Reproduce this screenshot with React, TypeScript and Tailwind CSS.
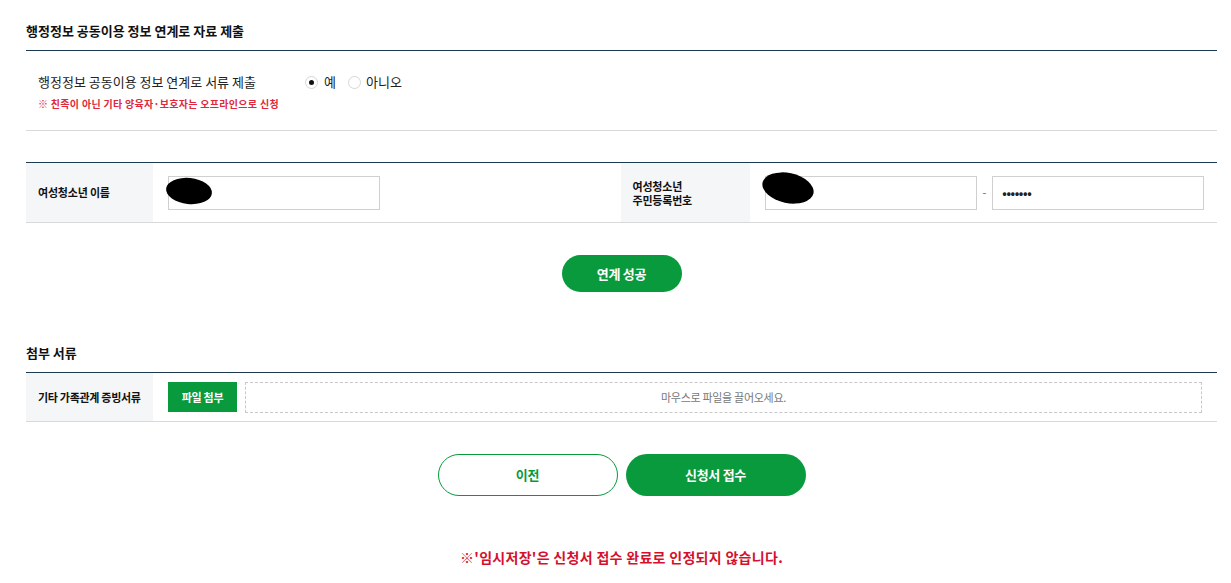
import React from "react";

const font = { fontFamily: '"Noto Sans CJK KR", "Noto Sans", sans-serif' };

function Radio({ checked }: { checked?: boolean }) {
  return (
    <span className="inline-flex h-[13px] w-[13px] items-center justify-center rounded-full border border-[#d6d6d6] bg-white">
      {checked && <span className="h-[5px] w-[5px] rounded-full bg-[#111]" />}
    </span>
  );
}

export default function App() {
  return (
    <div className="min-h-[583px] w-full bg-white pl-[26px] pr-[14px] text-[#222]" style={font}>
      {/* Section 1 title */}
      <div className="border-b border-[#1d3b50] pb-[10px] pt-[22px]">
        <h2 className="text-[13px] font-bold leading-[18px] tracking-[0px] text-[#111]">
          행정정보 공동이용 정보 연계로 자료 제출
        </h2>
      </div>
      <div className="border-b border-[#d9d9d9] pb-[19px] pl-[12px] pt-[22px]">
        <div className="flex items-center leading-[18px]">
          <span className="w-[267px] text-[13px] tracking-[0px] text-[#222]">
            행정정보 공동이용 정보 연계로 서류 제출
          </span>
          <label className="flex items-center gap-[6px] text-[13px]">
            <Radio checked />
            <span>예</span>
          </label>
          <label className="ml-[12px] flex items-center gap-[5px] text-[13px]">
            <Radio />
            <span>아니오</span>
          </label>
        </div>
        <p className="mt-[6px] text-[10px] font-bold leading-[14px] tracking-[0.3px] text-[#e0283c]">
          ※ 친족이 아닌 기타 양육자·보호자는 오프라인으로 신청
        </p>
      </div>

      {/* Youth info table */}
      <div className="mt-[31px] grid grid-cols-[127px_1fr_129px_1fr] border-b border-t border-b-[#d9d9d9] border-t-[#1d3b50]">
        <div className="flex h-[59px] items-center bg-[#f5f6f8] pl-[12px] text-[11px] font-bold tracking-[-0.2px] text-[#111]">
          여성청소년 이름
        </div>
        <div className="flex items-center pl-[15px]">
          <div className="relative h-[34px] w-[212px] border border-[#d0d0d0] bg-white">
            <div className="absolute left-[-3px] top-[1px] h-[26px] w-[46px] rotate-[6deg] rounded-[50%] bg-black" />
          </div>
        </div>
        <div className="flex items-center bg-[#f5f6f8] pl-[12px] text-[11px] font-bold leading-[14px] tracking-[-0.2px] text-[#111]">
          <div>
            여성청소년
            <br />
            주민등록번호
          </div>
        </div>
        <div className="flex items-center pl-[15px]">
          <div className="relative h-[34px] w-[212px] border border-[#d0d0d0] bg-white">
            <div className="absolute left-[-4px] top-[-4px] h-[30px] w-[52px] rotate-[12deg] rounded-[50%] bg-black" />
          </div>
          <span className="mx-[6px] text-[11px] text-[#666]">-</span>
          <div className="flex h-[34px] w-[212px] items-center border border-[#d0d0d0] bg-white pl-[9px] text-[12px] font-bold tracking-[-0.4px] text-[#222]">
            •••••••
          </div>
        </div>
      </div>

      <div className="mt-[32px] flex justify-center">
        <button className="h-[37px] w-[120px] rounded-full bg-[#089a3d] text-[13px] font-bold tracking-[-0.3px] text-white">
          연계 성공
        </button>
      </div>

      {/* Attachments */}
      <div className="mt-[52px] border-b border-[#1d3b50] pb-[10px]">
        <h2 className="text-[13px] font-bold leading-[18px] tracking-[0px] text-[#111]">첨부 서류</h2>
      </div>
      <div className="grid grid-cols-[127px_1fr] border-b border-[#d9d9d9]">
        <div className="flex h-[48px] items-center bg-[#f5f6f8] pl-[12px] text-[11px] font-bold tracking-[-0.3px] text-[#111]">
          기타 가족관계 증빙서류
        </div>
        <div className="flex items-center gap-[8px] pl-[15px] pr-[15px]">
          <button className="h-[30px] w-[69px] bg-[#089a3d] text-[11px] font-bold tracking-[-0.3px] text-white">
            파일 첨부
          </button>
          <div className="flex h-[31px] flex-1 items-center justify-center border border-dashed border-[#c8c8c8] text-[11px] tracking-[-0.3px] text-[#777]">
            마우스로 파일을 끌어오세요.
          </div>
        </div>
      </div>

      <div className="mt-[32px] flex justify-center gap-[8px]">
        <button className="h-[42px] w-[180px] rounded-full border border-[#089a3d] bg-white text-[13px] font-bold tracking-[-0.3px] text-[#089a3d]">
          이전
        </button>
        <button className="h-[42px] w-[180px] rounded-full bg-[#089a3d] text-[13px] font-bold tracking-[-0.3px] text-white">
          신청서 접수
        </button>
      </div>

      <p className="mt-[51px] text-center text-[14px] font-bold leading-[20px] tracking-[0.3px] text-[#d4112c]">
        ※'임시저장'은 신청서 접수 완료로 인정되지 않습니다.
      </p>
    </div>
  );
}
